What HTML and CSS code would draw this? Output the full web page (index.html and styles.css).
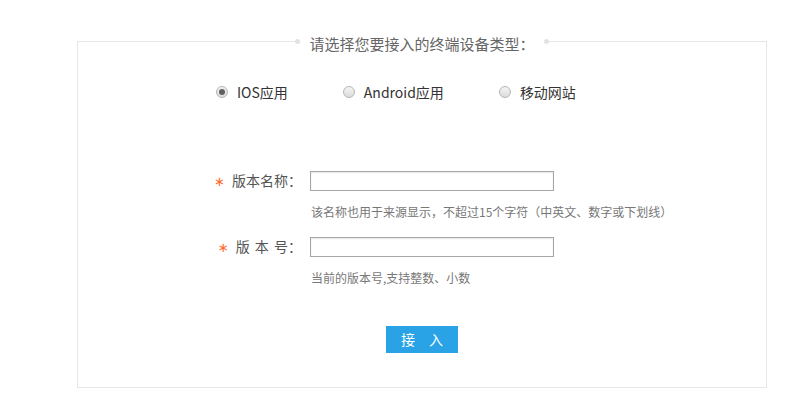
FILE: index.html
```html
<!DOCTYPE html>
<html lang="zh-CN">
<head>
<meta charset="utf-8">
<title>接入终端设备</title>
<link rel="stylesheet" href="styles.css">
</head>
<body>
<div class="panel">
  <div class="legend"><span class="legend-text">请选择您要接入的终端设备类型：</span></div>

  <div class="radio-row">
    <label class="radio-item"><span class="radio checked"></span><span class="radio-label">IOS应用</span></label>
    <label class="radio-item"><span class="radio"></span><span class="radio-label">Android应用</span></label>
    <label class="radio-item"><span class="radio"></span><span class="radio-label">移动网站</span></label>
  </div>

  <div class="form-row first">
    <span class="field-label"><span class="star">∗</span>版本名称：</span>
    <input class="text-input" type="text">
  </div>
  <div class="hint">该名称也用于来源显示，不超过15个字符（中英文、数字或下划线）</div>

  <div class="form-row second">
    <span class="field-label"><span class="star">∗</span><span class="spaced">版 本 号</span>：</span>
    <input class="text-input" type="text">
  </div>
  <div class="hint">当前的版本号,支持整数、小数</div>

  <div class="actions">
    <button class="submit" type="button">接　入</button>
  </div>
</div>
</body>
</html>
```

FILE: styles.css
```css
* { box-sizing: border-box; }

body {
  margin: 0;
  background: #fff;
  font-family: "Noto Sans CJK SC", "Noto Sans", sans-serif;
  color: #333;
}

.panel {
  margin: 41px 0 0 77px;
  width: 690px;
  height: 347px;
  border: 1px solid #e6e6e6;
}

.legend {
  display: flex;
  justify-content: center;
  height: 20px;
  margin-top: -8px;
}

.legend-text {
  position: relative;
  display: block;
  padding: 0 12px;
  background: #fff;
  font-size: 15px;
  line-height: 20px;
  color: #666;
}

.legend-text::before,
.legend-text::after {
  content: "";
  position: absolute;
  top: 5px;
  width: 5px;
  height: 5px;
  border-radius: 50%;
  background: #e2e2e2;
}
.legend-text::before { left: -2px; }
.legend-text::after { right: -2px; }

.radio-row {
  display: flex;
  gap: 55px;
  height: 20px;
  margin-top: 28px;
  padding-left: 138px;
}

.radio-item {
  display: flex;
  align-items: center;
  gap: 9px;
  font-size: 14px;
  line-height: 20px;
  color: #333;
}

.radio {
  display: flex;
  align-items: center;
  justify-content: center;
  width: 12px;
  height: 12px;
  border-radius: 50%;
  border: 1px solid #b5b5b5;
  background: linear-gradient(#f4f4f4, #dcdcdc);
}

.radio.checked::after {
  content: "";
  width: 6px;
  height: 6px;
  border-radius: 50%;
  background: #606060;
}

.form-row {
  display: flex;
  align-items: center;
  height: 20px;
}
.form-row.first { margin-top: 69px; }
.form-row.second { margin-top: 15px; }

.field-label {
  width: 224px;
  text-align: right;
  font-size: 14px;
  line-height: 20px;
  color: #555;
}

.spaced { word-spacing: 2px; }

.star {
  margin-right: 7px;
  font-family: "DejaVu Sans", sans-serif;
  font-size: 13px;
  color: #ff6a2c;
}

.text-input {
  width: 244px;
  height: 20px;
  margin: 0 0 0 8px;
  padding: 0 4px;
  border: 1px solid #a6a6a6;
  box-shadow: inset 0 1px 2px rgba(0, 0, 0, 0.1);
  font: inherit;
  font-size: 12px;
  outline: none;
}

.hint {
  margin-top: 11px;
  padding-left: 233px;
  height: 20px;
  font-size: 12px;
  line-height: 20px;
  color: #777;
}

.actions {
  display: flex;
  justify-content: center;
  margin-top: 38px;
}

.submit {
  width: 72px;
  height: 27px;
  padding: 0;
  border: none;
  background: #29a3e6;
  color: #fff;
  font-family: "Noto Sans CJK SC", sans-serif;
  font-size: 14px;
  line-height: 27px;
  cursor: pointer;
}
```
